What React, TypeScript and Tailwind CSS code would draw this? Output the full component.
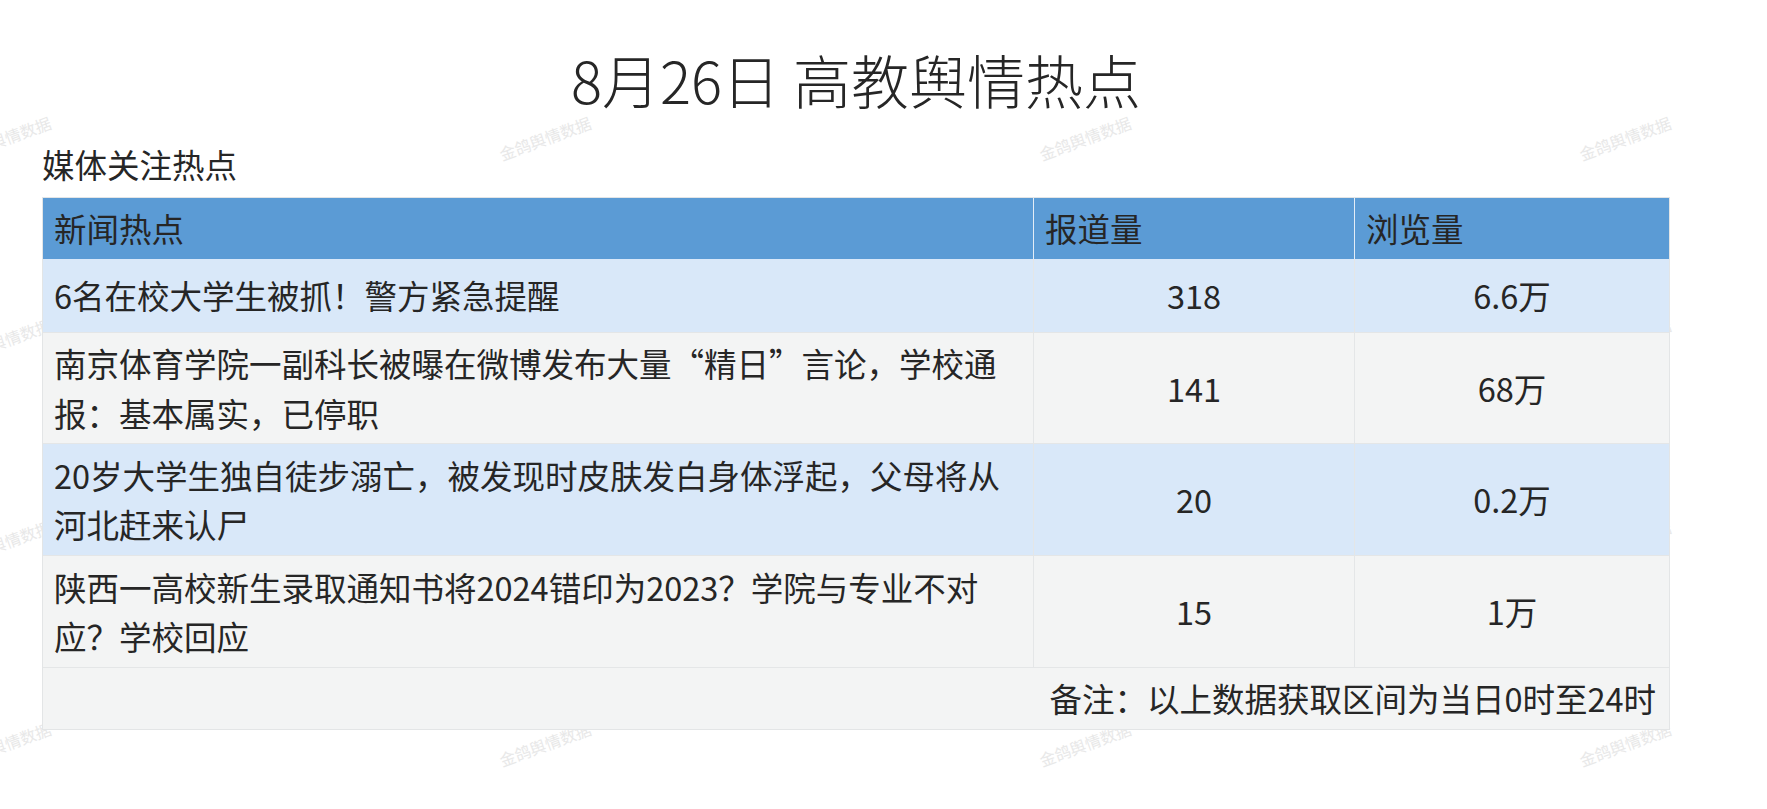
type Row = { title: string; reports: string; views: string; tone: 'blue' | 'gray'; h: string };

const rows: Row[] = [
  { title: '6名在校大学生被抓！警方紧急提醒', reports: '318', views: '6.6万', tone: 'blue', h: 'h-[74px]' },
  { title: '南京体育学院一副科长被曝在微博发布大量“精日”言论，学校通报：基本属实，已停职', reports: '141', views: '68万', tone: 'gray', h: 'h-[111px]' },
  { title: '20岁大学生独自徒步溺亡，被发现时皮肤发白身体浮起，父母将从河北赶来认尸', reports: '20', views: '0.2万', tone: 'blue', h: 'h-[112px]' },
  { title: '陕西一高校新生录取通知书将2024错印为2023？学院与专业不对应？学校回应', reports: '15', views: '1万', tone: 'gray', h: 'h-[112px]' },
];

// watermark grid: 540px apart horizontally, ~202px vertically
const marks: { x: number; y: number }[] = [];
for (let j = 0; j < 4; j++) {
  for (let i = 0; i < 4; i++) {
    marks.push({ x: 5 + i * 540, y: 138 + j * 202 });
  }
}

export default function App() {
  return (
    <div className="relative min-h-[809px] w-full overflow-hidden bg-white font-['Noto_Sans_CJK_SC','Noto_Sans',sans-serif] text-[#262626]">
      {marks.map((m, k) => (
        <span
          key={k}
          className="absolute whitespace-nowrap text-[16px] leading-none text-[#e8e8e8] -translate-x-1/2 -translate-y-1/2 -rotate-[20deg] select-none"
          style={{ left: m.x, top: m.y }}
        >
          金鸽舆情数据
        </span>
      ))}

      <div className="relative w-[1670px] pl-[42px] pt-[37px]">
        <h1 className="text-center text-[58px] font-light leading-[84px]">8月26日 高教舆情热点</h1>
        <div className="mt-[18px] text-[32.5px] leading-[49.5px]">媒体关注热点</div>

        <div className="mt-[8px] border border-[#e3e5e6] text-[32.5px] leading-[49.5px]">
          <div className="grid h-[61px] grid-cols-[990px_321px_315px] bg-[#5b9bd5]">
            <div className="flex items-center px-[11px]">新闻热点</div>
            <div className="flex items-center border-l border-[#e4edf7] px-[11px]">报道量</div>
            <div className="flex items-center border-l border-[#e4edf7] px-[11px]">浏览量</div>
          </div>

          {rows.map((r) => (
            <div
              key={r.title}
              className={`grid grid-cols-[990px_321px_315px] border-b border-[#e4e6e7] ${r.h} ${
                r.tone === 'blue' ? 'bg-[#d9e8f9]' : 'bg-[#f3f4f4]'
              }`}
            >
              <div className="flex items-center px-[11px]">{r.title}</div>
              <div className="flex items-center justify-center border-l border-[#e4e6e7]">{r.reports}</div>
              <div className="flex items-center justify-center border-l border-[#e4e6e7]">{r.views}</div>
            </div>
          ))}

          <div className="flex h-[61px] items-center justify-end bg-[#f3f4f4] pr-[13px]">
            备注：以上数据获取区间为当日0时至24时
          </div>
        </div>
      </div>
    </div>
  );
}
